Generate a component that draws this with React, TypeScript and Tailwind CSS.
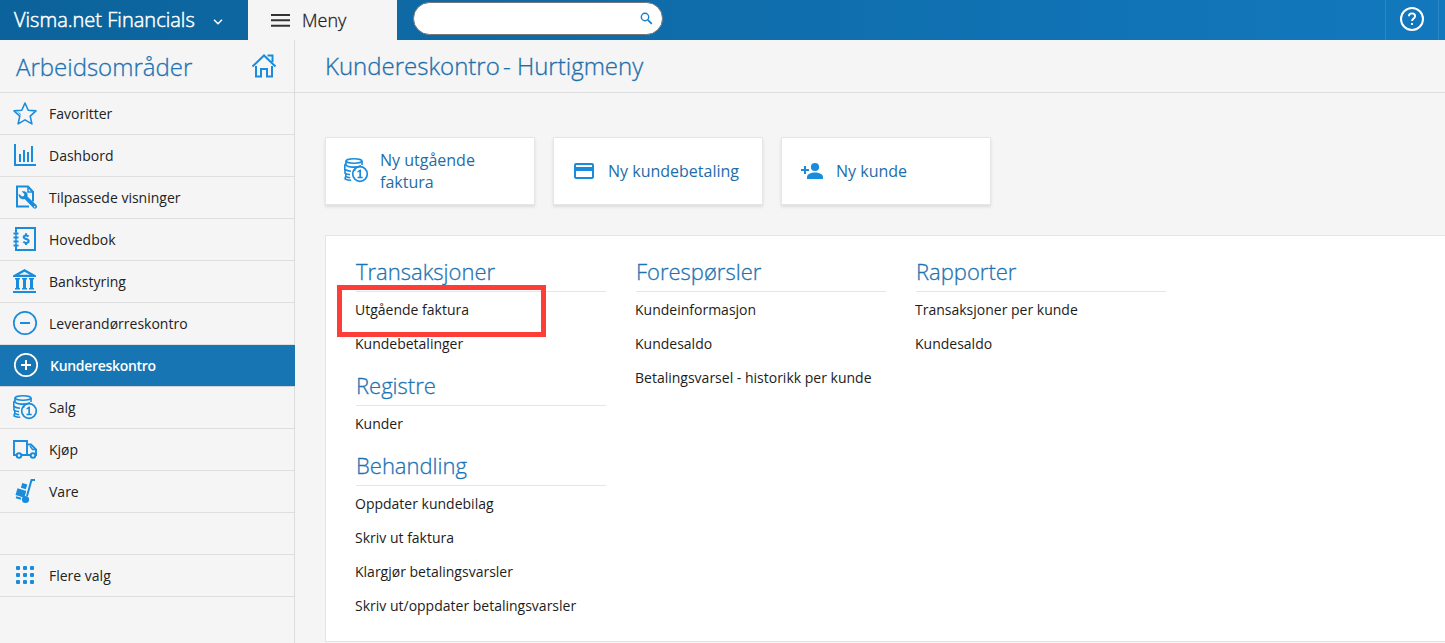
import type { ReactNode } from 'react';

const BLUE = '#1a8cdc';

function Glyph({ children }: { children: ReactNode }) {
  return (
    <svg width="26" height="26" viewBox="0 0 26 26" fill="none" stroke={BLUE} strokeWidth="2" className="block shrink-0">
      {children}
    </svg>
  );
}

function Coins() {
  return (
    <Glyph>
      <g strokeWidth="1.6">
        <ellipse cx="11" cy="3" rx="8" ry="2.2" />
        <path d="M3 3v4.2c1 1 3 1.7 6 1.9 3.500.2 7-.3 9-1.400M19 3v4" />
        <path d="M3 5.500 1.800 7v4.500c1.500 1 3.500 1.600 6.200 1.700" />
        <path d="M2 11.500v3.700c1.400.9 3 1.300 5 1.400M2.800 15.500v3c1.200.7 2.500 1 4.400 1.200M2.200 18.800V21c1.500.9 3.500 1.300 6 1.300" />
        <path d="M10.500 12h2" />
        <circle cx="17" cy="16" r="7.300" strokeWidth="1.700" />
      </g>
      <path d="M14.500 13.200 17 11.500h1v7.300h1.700v1.400h-5.200v-1.400h1.800v-5.100l-1.800.8z" fill={BLUE} stroke="none" />
    </Glyph>
  );
}

function Wrench() {
  return (
    <Glyph>
      <path d="M17 21H5V1h11l5 5.500V16" transform="translate(0 .5)" />
      <path d="M16 1v6h6" strokeWidth="1.500" />
      <path
        d="M6.800 8.800l3.200 2.700 1.900-.6.500-2-2.700-2.400c2-.8 4.300-.2 5.300 1.500.7 1.200.7 2.400.4 3.500l9 8.500c.9 1 .8 2.300 0 3.100-.9.9-2.200.9-3 0L12.600 14c-1.600.6-3.500.2-4.800-1.200-1-1.200-1.400-2.600-1-4z"
        fill={BLUE}
        stroke="none"
      />
      <circle cx="22.600" cy="21.800" r=".8" fill="#f5f5f5" stroke="none" />
    </Glyph>
  );
}

function Ledger() {
  return (
    <Glyph>
      <path d="M4 5V1h19v22H4v-3.500" />
      <path d="M1.500 6.500h5M1.500 10.500h5M1.500 14.500h5M1.500 18.500h5" strokeWidth="1.800" />
      <path d="M4 5v15" strokeWidth="1.500" />
      <path d="M16.500 9.500c-.7-.8-1.500-1.100-2.500-1.100-1.400 0-2.300.6-2.300 1.700 0 2.600 5 1.200 5 4 0 1.200-1 1.800-2.500 1.800-1.200 0-2.100-.4-2.800-1.200M14 6.200v2.200M14 15.900v2.200" />
    </Glyph>
  );
}

function Bank() {
  return (
    <Glyph>
      <path d="M1 6.500 12.500 0 24 6.500V8H1z M7 5.700h11L12.500 2.700z" fill={BLUE} fillRule="evenodd" stroke="none" />
      <path
        d="M3 9h5v1.500H7v8.500h1v1.500H3V19h1v-8.500H3zM10 9h5v1.500h-1v8.500h1v1.500h-5V19h1v-8.500h-1zM17 9h5v1.500h-1v8.500h1v1.500h-5V19h1v-8.500h-1zM1 22h23v2H1z"
        fill={BLUE}
        stroke="none"
      />
    </Glyph>
  );
}

function Truck() {
  return (
    <Glyph>
      <path d="M4 18H2V4h13v14h-5M15 7.500h4l5 5V18h-1M18 18h-3" strokeWidth="1.900" />
      <path d="m18 9 2.500 3.500H24" strokeWidth="1.300" />
      <circle cx="7" cy="18.500" r="2.300" />
      <circle cx="21" cy="18.500" r="2.300" />
    </Glyph>
  );
}

function Trolley() {
  return (
    <Glyph>
      <path d="M23 1h-3.500L15 17" />
      <path d="M5.500 9.200 14.300 12l-2 6.700-8.800-2.700zM10.300 4l5 1.400-1.400 4.900-5-1.500z" fill={BLUE} stroke="none" />
      <path d="m4 18.200 5 1.600" />
      <circle cx="13.500" cy="20.500" r="3.600" fill={BLUE} stroke="none" />
    </Glyph>
  );
}

const dots = [5.9, 12.9, 19.9];

type Item = { label?: string; icon?: ReactNode; active?: boolean };

const items: Item[] = [
  {
    label: 'Favoritter',
    icon: (
      <Glyph>
        <path
          d="m13 2 3.200 7.200 7.800.7-5.800 5.300 1.700 7.700-6.900-4-6.900 4 1.700-7.700L2 9.900l7.800-.7z"
          strokeWidth="1.600"
          strokeLinejoin="round"
        />
        <path d="m6.500 11.500 2.300 2" strokeWidth="1" />
      </Glyph>
    ),
  },
  {
    label: 'Dashbord',
    icon: (
      <Glyph>
        <path d="M3 1v21h21M8 11v8M12 7v12M16 9v10M20 3v16" />
      </Glyph>
    ),
  },
  { label: 'Tilpassede visninger', icon: <Wrench /> },
  { label: 'Hovedbok', icon: <Ledger /> },
  { label: 'Bankstyring', icon: <Bank /> },
  {
    label: 'Leverandørreskontro',
    icon: (
      <Glyph>
        <circle cx="13" cy="12" r="11.200" strokeWidth="1.700" />
        <path d="M8 12h10" />
      </Glyph>
    ),
  },
  {
    label: 'Kundereskontro',
    active: true,
    icon: (
      <Glyph>
        <g stroke="#fff">
          <circle cx="13" cy="12" r="11.200" strokeWidth="1.700" />
          <path d="M8 12h10M13 7v10" />
        </g>
      </Glyph>
    ),
  },
  { label: 'Salg', icon: <Coins /> },
  { label: 'Kjøp', icon: <Truck /> },
  { label: 'Vare', icon: <Trolley /> },
  {},
  {
    label: 'Flere valg',
    icon: (
      <Glyph>
        <g fill={BLUE} stroke="none">
          {dots.map((y) => dots.map((x) => <rect key={`${x}-${y}`} x={x - 1.9} y={y - 2.9} width="4" height="4" rx="1" />))}
        </g>
      </Glyph>
    ),
  },
];

function SideRow({ label, icon, active }: Item) {
  return (
    <li
      className={
        active
          ? 'flex h-[42px] items-start border-b border-[#d0d4d8] bg-[#1775b3] pl-[13px] pt-2 font-semibold tracking-[-0.3px] text-white'
          : 'mr-px flex h-[42px] items-start border-b border-[#dedede] pl-3 pt-2 text-[#222]'
      }
    >
      {icon}
      <span className="ml-[11px] text-[14px] leading-[25px]">{label}</span>
    </li>
  );
}

function QuickCard({ icon, children }: { icon: ReactNode; children: ReactNode }) {
  return (
    <a className="flex h-[68px] w-[210px] items-center border border-[#e6e6e6] bg-white pl-[17px] text-[16px] leading-[22px] text-[#1d6da9] shadow-[0_2px_3px_rgba(0,0,0,0.1)]">
      {icon}
      <span className="-mt-px ml-[11px]">{children}</span>
    </a>
  );
}

function Group({ title, links }: { title: string; links: string[] }) {
  return (
    <section>
      <h2 className="mb-px ml-px flex h-[46px] w-[250px] items-end border-b border-[#e6e6e6] pb-[5px] text-[22px] font-light leading-[30px] text-[#1d73b3] [-webkit-text-stroke:0.3px_currentColor]">
        {title}
      </h2>
      <ul>
        {links.map((l) => (
          <li key={l} className="h-[34px] text-[14px] leading-[34px] text-[#1c1c1c] whitespace-nowrap">
            {l}
          </li>
        ))}
      </ul>
    </section>
  );
}

export default function App() {
  return (
    <div className="flex h-[643px] w-[1445px] flex-col overflow-hidden bg-[#f5f5f5] font-['Open_Sans',sans-serif]">
      <header className="flex h-10 shrink-0 bg-linear-to-r from-[#0c639b] to-[#1278bd]">
        <div className="flex w-[248px] items-center justify-between pl-[14px] pr-[25px] text-[20px] font-light text-white">
          <span className="whitespace-nowrap tracking-[0.02px] [-webkit-text-stroke:0.5px_currentColor]">Visma.net Financials</span>
          <svg width="10" height="6" viewBox="0 0 10 6" fill="none" stroke="#fff" strokeWidth="1.500" className="mt-[3px]">
            <path d="m1 .8 4 4 4-4" />
          </svg>
        </div>
        <div className="flex w-[149px] items-center bg-[#f5f5f5] pl-[23px] text-[18px] font-light text-[#222]">
          <svg width="19" height="13" viewBox="0 0 19 13" fill="#333">
            <path d="M0 0h19v2H0zM0 5.300h19v2H0zM0 10.700h19v2H0z" />
          </svg>
          <span className="ml-3 [-webkit-text-stroke:0.3px_currentColor]">Meny</span>
        </div>
        <div className="ml-4 mt-[2px] flex h-[33px] w-[250px] items-center justify-end rounded-full border border-[#777] bg-white pr-[9px]">
          <svg width="13" height="13" viewBox="0 0 13 13" fill="none" stroke="#1a80cc" strokeWidth="1.400">
            <circle cx="5" cy="5" r="3.700" />
            <path d="m7.800 7.800 4 4" strokeWidth="1.800" />
          </svg>
        </div>
        <div className="ml-auto mr-[6px] flex w-[54px] items-center justify-center border-x border-[#2b88c5]">
          <svg width="24" height="24" viewBox="0 0 24 24" fill="none" stroke="#fff" strokeWidth="2" className="-mt-[2px]">
            <circle cx="12" cy="12" r="11" />
            <path d="M8.900 9.300c0-1.700 1.400-2.900 3.100-2.900s3.100 1.200 3.100 2.800c0 2.200-3.100 2.500-3.100 4.900M12 16v2" strokeWidth="1.900" />
          </svg>
        </div>
      </header>
      <div className="flex min-h-0 flex-1">
        <nav className="w-[295px] shrink-0 bg-[linear-gradient(to_left,#dcdcdc_1px,transparent_1px)]">
          <div className="mr-px flex h-[53px] items-center justify-between border-b border-[#dedede] pl-[16px] pr-[17px]">
            <h1 className="pt-[2px] text-[24px] font-light text-[#1d73b3] [-webkit-text-stroke:0.3px_currentColor]">Arbeidsområder</h1>
            <svg width="26" height="24" viewBox="0 0 26 24" fill="none" stroke={BLUE} strokeWidth="2">
              <path d="M1.500 12.500 13 1.500l11.500 11M16.500 1.500H21.500V8M5 12v10.500h5V15h6v7.500h5V12" />
            </svg>
          </div>
          <ul>
            {items.map((item, i) => (
              <SideRow key={i} {...item} />
            ))}
          </ul>
        </nav>
        <main className="flex min-w-0 flex-1 flex-col">
          <h1 className="h-[53px] shrink-0 border-b border-[#dedede] pl-[30px] text-[24px] font-light leading-[52px] text-[#1d6faa] [-webkit-text-stroke:0.3px_currentColor]">
            Kundereskontro <span className="-ml-[3px]">- Hurtigmeny</span>
          </h1>
          <div className="ml-[30px] mt-11 flex gap-[18px]">
            <QuickCard icon={<Coins />}>
              Ny utgående
              <br />
              faktura
            </QuickCard>
            <QuickCard
              icon={
                <Glyph>
                  <rect x="4" y="6" width="18" height="14" rx="1" />
                  <path d="M4 11h18" strokeWidth="4" />
                </Glyph>
              }
            >
              Ny kundebetaling
            </QuickCard>
            <QuickCard
              icon={
                <Glyph>
                  <g fill={BLUE} stroke="none">
                    <circle cx="16" cy="9" r="4.100" />
                    <path d="M8 21v-2c0-3 4-4.500 8-4.500s8 1.500 8 4.500v2z" />
                    <path d="M5 8h2v3h3v2H7v3H5v-3H2v-2h3z" />
                  </g>
                </Glyph>
              }
            >
              Ny kunde
            </QuickCard>
          </div>
          <div className="relative ml-[30px] mt-[30px] flex h-[407px] shrink-0 border border-r-0 border-[#e4e4e4] bg-white pl-[29px] pt-[10px]">
            <div className="w-[280px]">
              <Group title="Transaksjoner" links={['Utgående faktura', 'Kundebetalinger']} />
              <div className="-mt-px">
                <Group title="Registre" links={['Kunder']} />
              </div>
              <div className="-mt-px">
                <Group
                  title="Behandling"
                  links={['Oppdater kundebilag', 'Skriv ut faktura', 'Klargjør betalingsvarsler', 'Skriv ut/oppdater betalingsvarsler']}
                />
              </div>
            </div>
            <div className="w-[280px]">
              <Group title="Forespørsler" links={['Kundeinformasjon', 'Kundesaldo', 'Betalingsvarsel - historikk per kunde']} />
            </div>
            <div className="w-[280px]">
              <Group title="Rapporter" links={['Transaksjoner per kunde', 'Kundesaldo']} />
            </div>
            <div className="absolute left-[11px] top-[49px] h-[52px] w-[209px] border-[5px] border-[#ff3d38]" />
          </div>
        </main>
      </div>
    </div>
  );
}
